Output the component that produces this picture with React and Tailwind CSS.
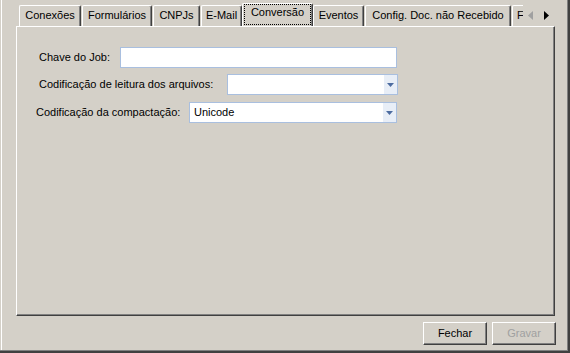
const tabs = [
  { label: 'Conexões', w: 'w-[62px]' },
  { label: 'Formulários', w: 'w-[70px]' },
  { label: 'CNPJs', w: 'w-[47px]' },
  { label: 'E-Mail', w: 'w-[41px]' },
  { label: 'Conversão', selected: true },
  { label: 'Eventos', w: 'w-[51px]' },
  { label: 'Config. Doc. não Recebido', w: 'w-[146px]' },
  { label: 'Filtros', w: 'w-[50px]', left: true },
]

function Tab({ label, w, selected, left }) {
  if (selected) {
    return (
      <div className="relative z-10 -mb-px -ml-px mr-0 h-[24px] w-[71px] flex-none rounded-t-[2px] border-l border-t border-r border-white border-r-[#404040] bg-[#d4d0c8] shadow-[inset_-1px_0_0_#808080]">
        <div className="mx-px mt-0 flex h-[21px] items-start justify-center border border-dotted border-black pt-px">
          <span className="leading-[13px]">{label}</span>
        </div>
      </div>
    )
  }
  return (
    <div
      className={`${w} ${left ? 'justify-start pl-[4px]' : 'justify-center'} mr-px flex h-[21px] flex-none rounded-t-[2px] border-l border-t border-r border-white border-r-[#404040] pt-[3px] shadow-[inset_-1px_0_0_#808080]`}
    >
      <span className="leading-[13px]">{label}</span>
    </div>
  )
}

function ComboArrow() {
  return (
    <div className="flex h-full w-[13px] items-center justify-center bg-[#e8eef7]">
      <svg width="7" height="4" viewBox="0 0 7 4">
        <path d="M0 0h7L3.5 4z" fill="#4d6ca0" />
      </svg>
    </div>
  )
}

function Button({ children, disabled }) {
  return (
    <div
      className={`flex h-[23px] w-[64px] items-center justify-center border-l border-t border-r border-b border-white border-r-[#404040] border-b-[#404040] shadow-[inset_-1px_-1px_0_#808080] ${disabled ? 'text-[#a0a0a0]' : 'text-black'}`}
    >
      {children}
    </div>
  )
}

export default function App() {
  return (
    <div
      className="h-[353px] w-[570px] bg-[#404040] pb-[2px] pr-[2px] text-[11px] leading-[13px] text-black"
      style={{ fontFamily: '"Liberation Sans", Arial, sans-serif' }}
    >
      <div className="h-full w-full border-b border-r border-[#808080] bg-[#d4d0c8] pl-px">
        <div className="flex h-full flex-col border-l border-white pl-[14px] pr-[11px] pt-[3px]">
          {/* tabs */}
          <div className="relative mr-px flex h-[23px] items-end overflow-hidden pl-[3px]">
            {tabs.map((t) => (
              <Tab key={t.label} {...t} />
            ))}
            <div className="absolute right-0 top-0 flex h-[23px] w-[32px] items-center gap-[11px] bg-[#d4d0c8] pl-[5px] pt-[2px]">
              <svg width="5" height="9" viewBox="0 0 5 9">
                <path d="M5 0v9L0 4.5z" fill="#a0a0a0" />
              </svg>
              <svg width="5" height="9" viewBox="0 0 5 9">
                <path d="M0 0v9l5-4.5z" fill="#000" />
              </svg>
            </div>
          </div>

          {/* panel */}
          <div className="mr-px h-[290px] border-l border-t border-r border-b border-white border-r-[#404040] border-b-[#404040] pl-[22px] pt-[20px] shadow-[inset_-1px_-1px_0_#808080]">
            <div className="flex h-[21px] items-center">
              <span className="w-[81px]">Chave do Job:</span>
              <div className="h-[21px] w-[277px] border border-[#a9bfdf] bg-white" />
            </div>
            <div className="mt-[6px] flex h-[21px] items-center">
              <span className="w-[188px]">Codificação de leitura dos arquivos:</span>
              <div className="flex h-[21px] w-[171px] justify-end border border-[#a9bfdf] bg-white">
                <ComboArrow />
              </div>
            </div>
            <div className="-ml-[3px] mt-[7px] flex h-[21px] items-center">
              <span className="w-[153px]">Codificação da compactação:</span>
              <div className="flex h-[21px] w-[208px] items-center border border-[#a9bfdf] bg-white">
                <span className="flex-1 pl-[4px]">Unicode</span>
                <ComboArrow />
              </div>
            </div>
          </div>

          {/* buttons */}
          <div className="mt-[6px] flex justify-end gap-[5px]">
            <Button>Fechar</Button>
            <Button disabled>Gravar</Button>
          </div>
        </div>
      </div>
    </div>
  )
}
